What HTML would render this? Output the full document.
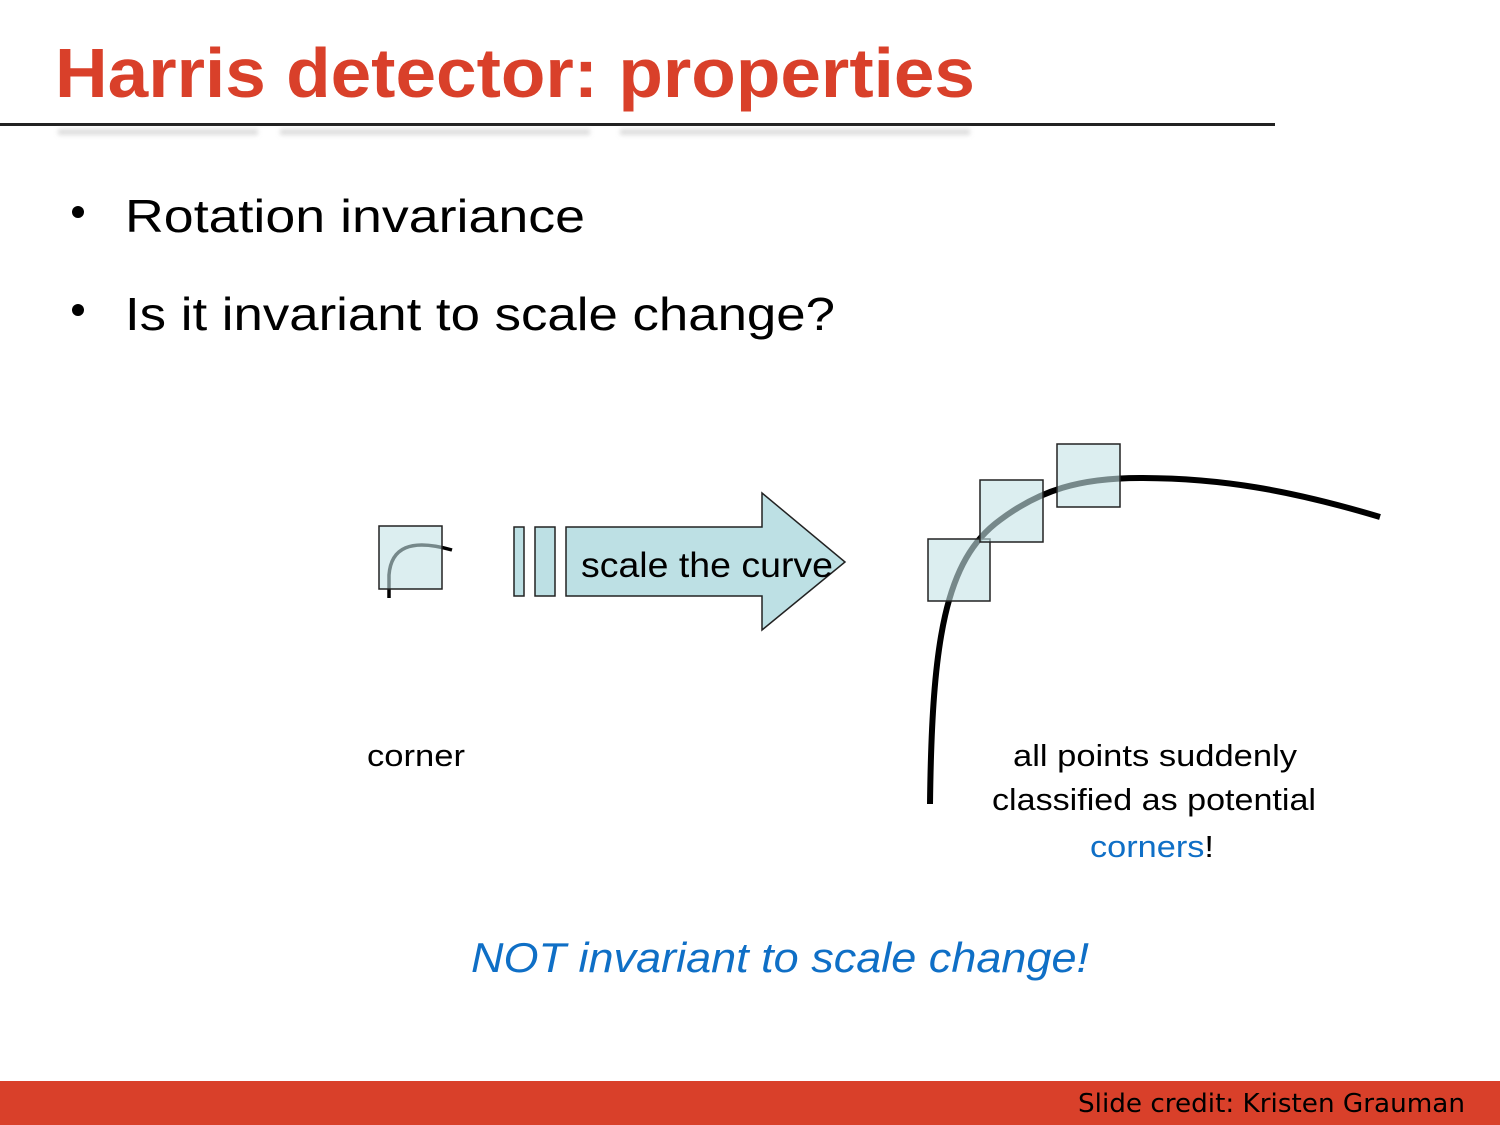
<!DOCTYPE html>
<html><head><meta charset="utf-8"><style>
html,body{margin:0;padding:0;background:#fff;}
svg{display:block;}
</style></head><body>
<svg width="1500" height="1125" viewBox="0 0 1500 1125" xmlns="http://www.w3.org/2000/svg">
<defs><filter id="b" x="-5%" y="-100%" width="110%" height="300%"><feGaussianBlur stdDeviation="2.5"/></filter></defs>
<text x="55" y="97" font-family="Liberation Sans, sans-serif" font-weight="bold" font-size="70" fill="#d9402a" textLength="920" lengthAdjust="spacingAndGlyphs">Harris detector: properties</text>
<rect x="0" y="123" width="1275" height="3" fill="#222"/>
<g filter="url(#b)" fill="#bbb" opacity="0.5">
<rect x="58" y="129" width="200" height="6"/><rect x="280" y="129" width="310" height="6"/><rect x="620" y="129" width="350" height="6"/>
</g>
<g font-family="Liberation Sans, sans-serif" fill="#000">
<circle cx="78" cy="212" r="6"/>
<text x="125" y="232" font-size="46" textLength="460" lengthAdjust="spacingAndGlyphs">Rotation invariance</text>
<circle cx="78" cy="310" r="6"/>
<text x="125" y="330" font-size="46" textLength="710" lengthAdjust="spacingAndGlyphs">Is it invariant to scale change?</text>
</g>
<path d="M389,598 L389,575 C391,548 410,538 452,550" fill="none" stroke="#000" stroke-width="3.5"/>
<rect x="379" y="526" width="63" height="63" fill="#c4e2e6" fill-opacity="0.6" stroke="#222" stroke-width="1.5"/>
<rect x="514" y="527" width="10" height="69" fill="#bde0e4" stroke="#222" stroke-width="1.5"/>
<rect x="535" y="527" width="20" height="69" fill="#bde0e4" stroke="#222" stroke-width="1.5"/>
<path d="M566,527 L762,527 L762,493 L845,562 L762,630 L762,596 L566,596 Z" fill="#bde0e4" stroke="#222" stroke-width="1.5"/>
<text x="581" y="577" font-family="Liberation Sans, sans-serif" font-size="35" fill="#000" textLength="252" lengthAdjust="spacingAndGlyphs">scale the curve</text>
<path d="M930,804 C932,640 945,560 1000,520 C1040,490 1080,478 1140,478 C1220,478 1290,490 1380,517" fill="none" stroke="#000" stroke-width="6"/>
<rect x="928" y="539" width="62" height="62" fill="#c4e2e6" fill-opacity="0.6" stroke="#222" stroke-width="1.5"/>
<rect x="980" y="480" width="63" height="62" fill="#c4e2e6" fill-opacity="0.6" stroke="#222" stroke-width="1.5"/>
<rect x="1057" y="444" width="63" height="63" fill="#c4e2e6" fill-opacity="0.6" stroke="#222" stroke-width="1.5"/>
<g font-family="Liberation Sans, sans-serif" font-size="31" fill="#000" text-anchor="middle">
<text x="416" y="766" textLength="98" lengthAdjust="spacingAndGlyphs">corner</text>
<text x="1155" y="766" textLength="284" lengthAdjust="spacingAndGlyphs">all points suddenly</text>
<text x="1154" y="810" textLength="324" lengthAdjust="spacingAndGlyphs">classified as potential</text>
<text x="1152" y="857" textLength="124" lengthAdjust="spacingAndGlyphs"><tspan fill="#0f6fc6">corners</tspan>!</text>
</g>
<text x="780" y="972" text-anchor="middle" font-family="Liberation Sans, sans-serif" font-style="italic" font-size="42" fill="#0f6fc6" textLength="618" lengthAdjust="spacingAndGlyphs">NOT invariant to scale change!</text>
<rect x="0" y="1081" width="1500" height="44" fill="#d9402a"/>
<text x="1078" y="1112" font-family="DejaVu Sans, sans-serif" font-size="26" fill="#000" textLength="387" lengthAdjust="spacingAndGlyphs">Slide credit: Kristen Grauman</text>
</svg>
</body></html>
